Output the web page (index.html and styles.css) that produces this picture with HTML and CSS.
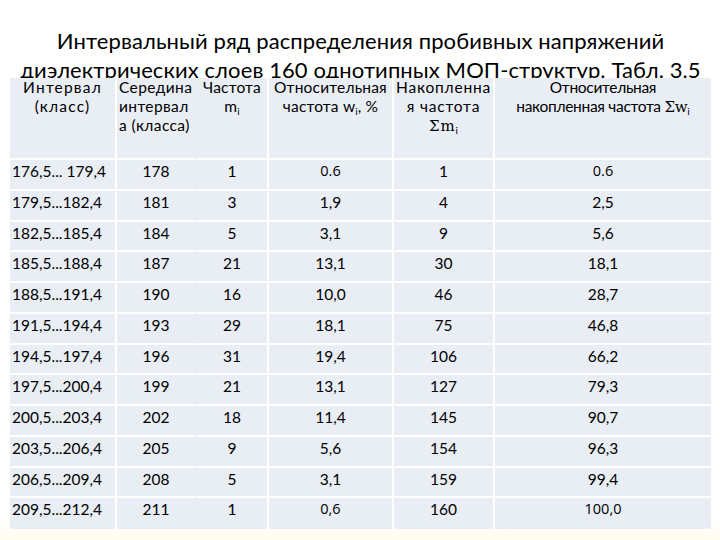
FILE: index.html
```html
<!DOCTYPE html>
<html lang="ru">
<head>
<meta charset="utf-8">
<title>Интервальный ряд</title>
<link rel="stylesheet" href="styles.css">
</head>
<body>
<div class="slide">
  <h1 class="title">Интервальный ряд распределения пробивных напряжений диэлектрических слоев 160 однотипных МОП-структур. Табл. 3.5</h1>
  <div class="table">
    <div class="cell head c1 h-int">Интервал<br>(класс)</div>
    <div class="cell head c2 left h-mid">Середина<br>интервал<br>а (класса)</div>
    <div class="cell head c3 h-fr">Частота<br>m<sub>i</sub></div>
    <div class="cell head c4 h-rel">Относительная<br>частота w<sub>i</sub>, %</div>
    <div class="cell head c5 h-acc">Накопленна<br>я частота<br><span class="sig">Σm<sub>i</sub></span></div>
    <div class="cell head c6 h-racc">Относительная<br>накопленная частота <span class="sig">Σw<sub>i</sub></span></div>

    <div class="cell c1 left">176,5... 179,4</div><div class="cell c2">178</div><div class="cell c3">1</div><div class="cell c4 alt">0.6</div><div class="cell c5">1</div><div class="cell c6 alt">0.6</div>
    <div class="cell c1 left">179,5...182,4</div><div class="cell c2">181</div><div class="cell c3">3</div><div class="cell c4">1,9</div><div class="cell c5">4</div><div class="cell c6">2,5</div>
    <div class="cell c1 left">182,5...185,4</div><div class="cell c2">184</div><div class="cell c3">5</div><div class="cell c4">3,1</div><div class="cell c5">9</div><div class="cell c6">5,6</div>
    <div class="cell c1 left">185,5...188,4</div><div class="cell c2">187</div><div class="cell c3">21</div><div class="cell c4">13,1</div><div class="cell c5">30</div><div class="cell c6">18,1</div>
    <div class="cell c1 left">188,5...191,4</div><div class="cell c2">190</div><div class="cell c3">16</div><div class="cell c4">10,0</div><div class="cell c5">46</div><div class="cell c6">28,7</div>
    <div class="cell c1 left">191,5...194,4</div><div class="cell c2">193</div><div class="cell c3">29</div><div class="cell c4">18,1</div><div class="cell c5">75</div><div class="cell c6">46,8</div>
    <div class="cell c1 left">194,5...197,4</div><div class="cell c2">196</div><div class="cell c3">31</div><div class="cell c4">19,4</div><div class="cell c5">106</div><div class="cell c6">66,2</div>
    <div class="cell c1 left">197,5...200,4</div><div class="cell c2">199</div><div class="cell c3">21</div><div class="cell c4">13,1</div><div class="cell c5">127</div><div class="cell c6">79,3</div>
    <div class="cell c1 left">200,5...203,4</div><div class="cell c2">202</div><div class="cell c3">18</div><div class="cell c4">11,4</div><div class="cell c5">145</div><div class="cell c6">90,7</div>
    <div class="cell c1 left">203,5...206,4</div><div class="cell c2">205</div><div class="cell c3">9</div><div class="cell c4">5,6</div><div class="cell c5">154</div><div class="cell c6">96,3</div>
    <div class="cell c1 left">206,5...209,4</div><div class="cell c2">208</div><div class="cell c3">5</div><div class="cell c4">3,1</div><div class="cell c5">159</div><div class="cell c6">99,4</div>
    <div class="cell c1 left last">209,5...212,4</div><div class="cell c2 last">211</div><div class="cell c3 last">1</div><div class="cell c4 last alt">0,6</div><div class="cell c5 last">160</div><div class="cell c6 last alt">100,0</div>
  </div>
</div>
</body>
</html>
```
FILE: styles.css
```css
html, body {
  margin: 0;
  padding: 0;
}
body {
  width: 720px;
  height: 540px;
  overflow: hidden;
  background: linear-gradient(to bottom, #ffffff 0%, #ffffff 96%, #fffcee 100%);
  font-family: Lato, "Noto Sans", sans-serif;
  color: #000;
}
.slide {
  display: flex;
  flex-direction: column;
  padding: 0 9px 0 10px;
}
.title {
  margin: 0;
  padding-top: 26px;
  height: 52px;
  overflow: visible;
  font-weight: normal;
  font-size: 22px;
  line-height: 29px;
  letter-spacing: 0.1px;
  text-align: center;
  color: #000;
}
.table {
  position: relative;
  display: grid;
  grid-template-columns: 107px 80px 72px 125px 101px 216px;
  grid-template-rows: 82px repeat(12, 30.75px);
  background: #e9edf4;
}
.cell {
  box-sizing: border-box;
  border-right: 2px solid #fff;
  border-bottom: 2px solid #fff;
  text-align: center;
  font-size: 15.5px;
  line-height: 18px;
  padding: 2px 2px 0 2px;
  white-space: nowrap;
}
.cell.c2 { border-right-color: #e9edf4; }
.cell.c6 { border-right: none; }
.cell.last { border-bottom: none; }
.cell.left { text-align: left; }
.cell.alt { font-family: "Open Sans", sans-serif; font-size: 14.5px; }
.head {
  font-size: 15.5px;
  line-height: 19px;
  padding-top: 0;
}
.head.left { padding-left: 2px; }
.h-int { letter-spacing: 1.2px; }
.h-mid { letter-spacing: 0.4px; }
.h-fr { letter-spacing: 0.2px; }
.h-rel { letter-spacing: 0.2px; }
.h-acc { letter-spacing: 0.8px; }
.h-racc { letter-spacing: -0.3px; }
sub {
  font-size: 10px;
  vertical-align: -3px;
  line-height: 0;
  letter-spacing: 0;
}
.sig {
  font-family: "DejaVu Serif", serif;
  font-size: 15px;
}
.sig sub { font-family: Lato, sans-serif; }
```
